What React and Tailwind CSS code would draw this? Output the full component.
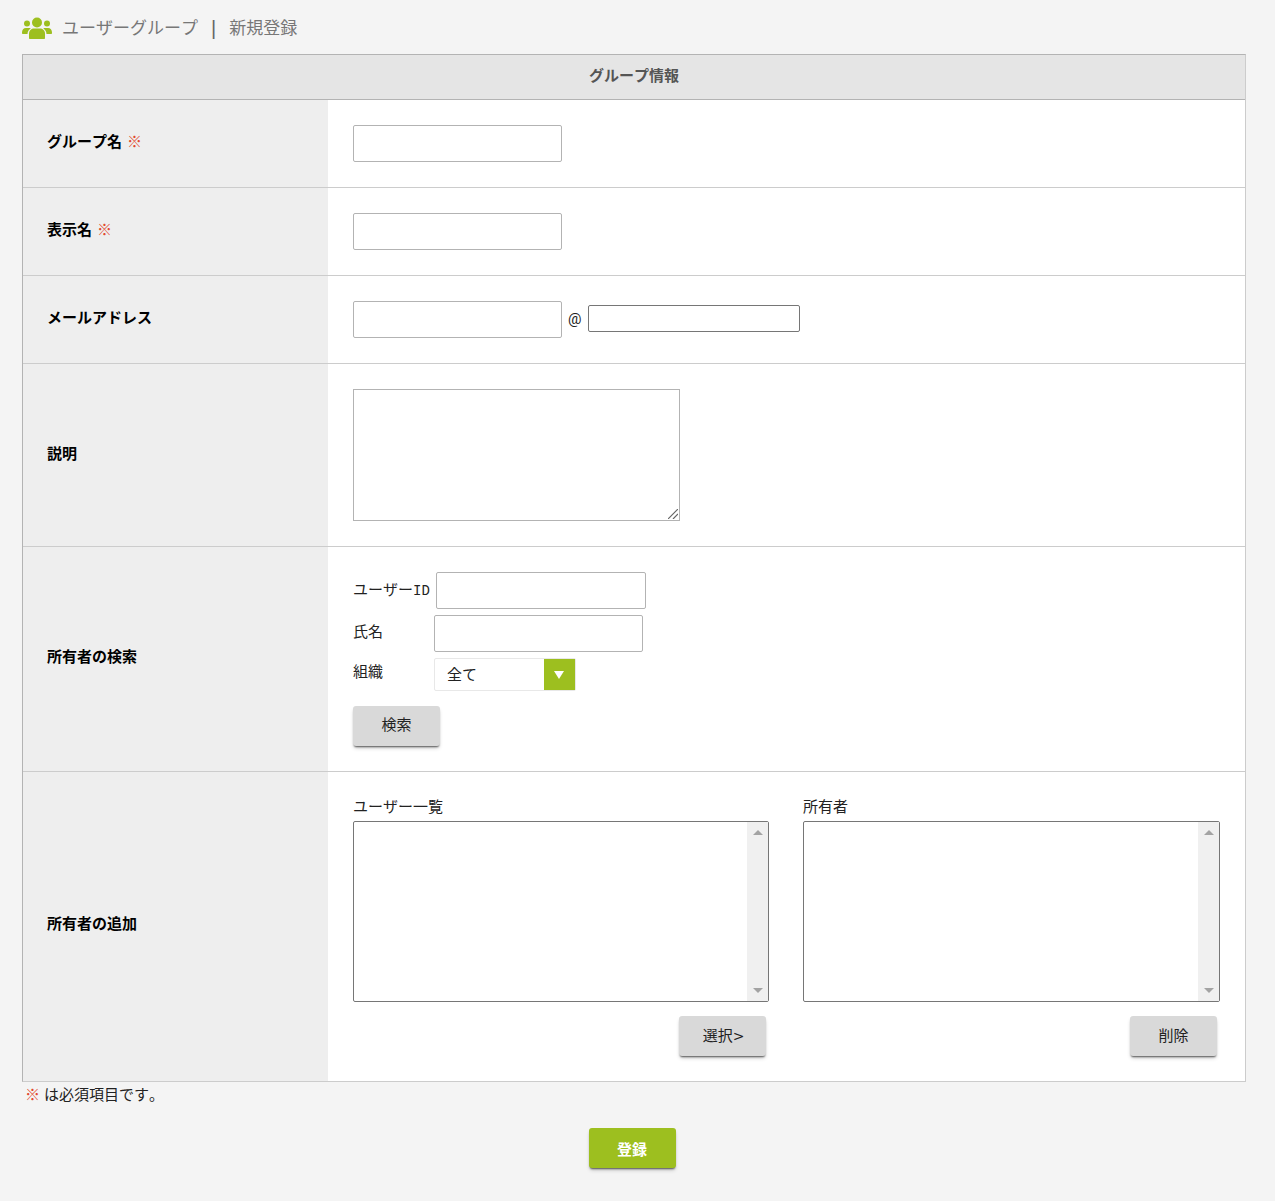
const inputCls = "h-[37px] border border-[#b3b3b3] rounded-[2px] bg-white outline-none";
const buttonShadow = "shadow-[0_2px_2px_-1px_rgba(0,0,0,0.6),0_3px_4px_-1px_rgba(0,0,0,0.2)]";

function GroupIcon() {
  return (
    <svg width="30" height="22" viewBox="0 0 30 22" fill="#9dbf1f">
      <circle cx="15" cy="5.500" r="5" />
      <circle cx="5" cy="6.500" r="3" />
      <circle cx="25" cy="6.500" r="3" />
      <path d="M7 21v-4.500c0-3 2.500-5 5-5h6c2.500 0 5 2 5 5V21c0 .6-.4 1-1 1H8c-.6 0-1-.4-1-1z" />
      <path d="M0 15.500c0-2.500 1.500-4.500 4-4.500h3c.6 0 1.200.2 1.700.4C6.800 12.700 5.600 14.500 5.500 17H1c-.6 0-1-.4-1-1z" />
      <path d="M30 15.500c0-2.500-1.500-4.500-4-4.500h-3c-.6 0-1.200.2-1.700.4 1.900 1.300 3.100 3.100 3.200 5.600H29c.6 0 1-.4 1-1z" />
    </svg>
  );
}

function Row({ label, required, height, labelPad = "pb-[3px]", children, last }) {
  return (
    <div className={`flex ${height} ${last ? "" : "border-b border-[#cccccc]"}`}>
      <div className={`w-[305px] shrink-0 bg-[#eeeeee] flex items-center pl-[24px] font-bold text-black ${labelPad}`}>
        {label}
        {required && <span className="ml-[5px] font-normal text-[#e2492f]">※</span>}
      </div>
      <div className="flex-1 bg-white pl-[25px] pt-[25px]">{children}</div>
    </div>
  );
}

function ListBox() {
  return (
    <div className="h-[181px] border border-[#767676] rounded-[2px] bg-white flex justify-end">
      <div className="w-[21px] bg-[#f0f0f0] flex flex-col items-center justify-between py-[8px]">
        <div className="w-0 h-0 border-x-[5px] border-x-transparent border-b-[5px] border-b-[#a3a3a3]" />
        <div className="w-0 h-0 border-x-[5px] border-x-transparent border-t-[5px] border-t-[#a3a3a3]" />
      </div>
    </div>
  );
}

function GrayButton({ children, className }) {
  return (
    <button className={`w-[87px] h-[40px] rounded-[3px] bg-[#d9d9d9] text-[#222222] ${buttonShadow} ${className}`}>
      {children}
    </button>
  );
}

export default function App() {
  return (
    <div className="min-h-[1201px] bg-[#f4f4f4] text-[15px] leading-[20px] text-[#222222] [font-kerning:none] font-['Roboto','Noto_Sans_CJK_JP',sans-serif]">
      <div className="h-[54px] flex items-center pl-[22px] pt-[2px] text-[17px] text-[#777777]">
        <GroupIcon />
        <span className="ml-[10px]">ユーザーグループ</span>
        <span className="ml-[13px] text-[20px] font-['Liberation_Sans'] text-[#666666] pb-[1px]">|</span>
        <span className="ml-[13px]">新規登録</span>
      </div>

      <div className="ml-[22px] w-[1224px] border border-[#b3b3b3] border-b-[#cccccc] border-r-[#cccccc]">
        <div className="h-[45px] bg-[#e5e5e5] border-b border-[#b3b3b3] flex items-center justify-center font-bold text-[#555555] pb-[2px]">
          グループ情報
        </div>
        <Row label="グループ名" required height="h-[88px]">
          <input className={`${inputCls} w-[209px]`} />
        </Row>
        <Row label="表示名" required height="h-[88px]">
          <input className={`${inputCls} w-[209px]`} />
        </Row>
        <Row label="メールアドレス" height="h-[88px]">
          <div className="flex items-center">
            <input className={`${inputCls} w-[209px]`} />
            <span className="ml-[6px] pb-[2px]">@</span>
            <input className="ml-[7px] mb-[2px] w-[212px] h-[27px] border border-[#767676] rounded-[2px] bg-white outline-none" />
          </div>
        </Row>
        <Row label="説明" height="h-[183px]">
          <div className="relative w-[327px]">
            <textarea className="block w-[327px] h-[132px] border border-[#b3b3b3] bg-white outline-none resize-none" />
            <svg className="absolute right-[2px] bottom-[2px]" width="10" height="10" viewBox="0 0 10 10" stroke="#666666" strokeWidth="1.200">
              <path d="M0 10 10 0M5 10l5-5" />
            </svg>
          </div>
        </Row>
        <Row label="所有者の検索" height="h-[225px]" labelPad="pb-[5px]">
          <div className="flex items-center">
            <span className="mr-[6px] pb-[1px]">
              ユーザー<span className="text-[14px] font-['Liberation_Mono']">ID</span>
            </span>
            <input className={`${inputCls} w-[210px]`} />
          </div>
          <div className="flex items-center mt-[6px]">
            <span className="w-[81px] pb-[3px]">氏名</span>
            <input className={`${inputCls} w-[209px]`} />
          </div>
          <div className="flex items-center mt-[6px]">
            <span className="w-[81px] pb-[5px]">組織</span>
            <div className="w-[142px] h-[33px] border border-[#e8e8e8] rounded-[2px] bg-white flex items-center justify-between">
              <span className="ml-[12px]">全て</span>
              <div className="w-[31px] h-full pr-[1px] bg-[#9dbf1f] flex items-center justify-center">
                <div className="w-0 h-0 border-x-[5px] border-x-transparent border-t-[8px] border-t-white" />
              </div>
            </div>
          </div>
          <GrayButton className="block mt-[15px] pb-[3px]">検索</GrayButton>
        </Row>
        <Row label="所有者の追加" height="h-[309px]" labelPad="pb-[5px]" last>
          <div className="flex gap-[34px] w-[867px]">
            <div className="w-[416px]">
              <div className="mb-[4px]">ユーザー一覧</div>
              <ListBox />
              <div className="flex justify-end pr-[3px] mt-[14px]">
                <GrayButton className="pl-[2px]">
                  選択<span className="text-[14px] font-['DejaVu_Sans']">&gt;</span>
                </GrayButton>
              </div>
            </div>
            <div className="w-[417px]">
              <div className="mb-[4px]">所有者</div>
              <ListBox />
              <div className="flex justify-end pr-[3px] mt-[14px]">
                <GrayButton>削除</GrayButton>
              </div>
            </div>
          </div>
        </Row>
      </div>

      <div className="mt-[3px] ml-[25px]">
        <span className="text-[#e2492f]">※</span>
        <span className="ml-[4px]">は必須項目です。</span>
      </div>
      <div className="flex justify-center mt-[23px] pr-[11px]">
        <button className={`w-[87px] h-[40px] pt-[3px] rounded-[3px] bg-[#9dbf1f] text-white font-bold ${buttonShadow}`}>
          登録
        </button>
      </div>
    </div>
  );
}
